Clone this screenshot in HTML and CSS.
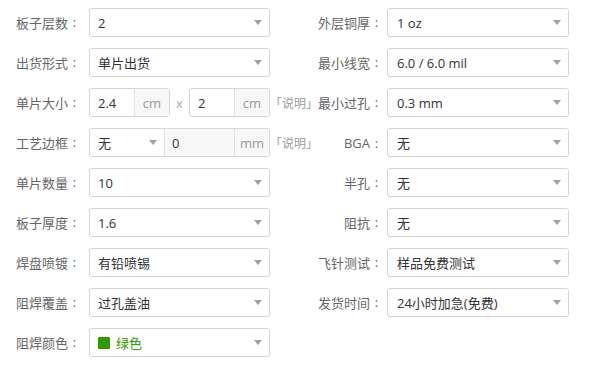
FILE: index.html
```html
<!DOCTYPE html>
<html lang="zh-CN">

<head>
  <meta charset="UTF-8">
  <meta name="viewport" content="width=device-width, initial-scale=1.0">
  <title>PCB 参数</title>
  <link rel="stylesheet" href="styles.css">
</head>

<body>
  <div class="form">
    <div class="item">
      <span class="label">板子层数</span>
      <div class="select"><span>2</span><i class="caret"></i></div>
    </div>
    <div class="item right">
      <span class="label">外层铜厚</span>
      <div class="select"><span>1 oz</span><i class="caret"></i></div>
    </div>

    <div class="item">
      <span class="label">出货形式</span>
      <div class="select"><span>单片出货</span><i class="caret"></i></div>
    </div>
    <div class="item right">
      <span class="label">最小线宽</span>
      <div class="select"><span>6.0 / 6.0 mil</span><i class="caret"></i></div>
    </div>

    <div class="item">
      <span class="label">单片大小</span>
      <div class="size">
        <div class="group small">
          <span class="input">2.4</span><span class="addon">cm</span>
        </div>
        <span class="times">x</span>
        <div class="group small">
          <span class="input">2</span><span class="addon">cm</span>
        </div>
      </div>
      <span class="note">「说明」</span>
    </div>
    <div class="item right">
      <span class="label">最小过孔</span>
      <div class="select"><span>0.3 mm</span><i class="caret"></i></div>
    </div>

    <div class="item">
      <span class="label">工艺边框</span>
      <div class="group">
        <span class="inner-select"><span>无</span><i class="caret"></i></span>
        <span class="input disabled">0</span><span class="addon">mm</span>
      </div>
      <span class="note">「说明」</span>
    </div>
    <div class="item right">
      <span class="label">BGA</span>
      <div class="select"><span>无</span><i class="caret"></i></div>
    </div>

    <div class="item">
      <span class="label">单片数量</span>
      <div class="select"><span>10</span><i class="caret"></i></div>
    </div>
    <div class="item right">
      <span class="label">半孔</span>
      <div class="select"><span>无</span><i class="caret"></i></div>
    </div>

    <div class="item">
      <span class="label">板子厚度</span>
      <div class="select"><span>1.6</span><i class="caret"></i></div>
    </div>
    <div class="item right">
      <span class="label">阻抗</span>
      <div class="select"><span>无</span><i class="caret"></i></div>
    </div>

    <div class="item">
      <span class="label">焊盘喷镀</span>
      <div class="select"><span>有铅喷锡</span><i class="caret"></i></div>
    </div>
    <div class="item right">
      <span class="label">飞针测试</span>
      <div class="select"><span>样品免费测试</span><i class="caret"></i></div>
    </div>

    <div class="item">
      <span class="label">阻焊覆盖</span>
      <div class="select"><span>过孔盖油</span><i class="caret"></i></div>
    </div>
    <div class="item right">
      <span class="label">发货时间</span>
      <div class="select"><span>24小时加急(免费)</span><i class="caret"></i></div>
    </div>

    <div class="item">
      <span class="label">阻焊颜色</span>
      <div class="select"><span class="color"><b class="swatch"></b>绿色</span><i class="caret"></i></div>
    </div>
  </div>
</body>

</html>
```

FILE: styles.css
```css
body {
  margin: 0;
  background: #fff;
  font-family: "Open Sans", "Noto Sans CJK SC", sans-serif;
  font-size: 13px;
  color: #333;
}

.form {
  display: grid;
  grid-template-columns: 274px 279px;
  grid-auto-rows: 29px;
  row-gap: 11px;
  padding: 8px 0 0 16px;
}

.item {
  display: flex;
  align-items: center;
}

.label {
  width: 65px;
  margin-right: 8px;
  color: #666;
  white-space: nowrap;
  display: flex;
}

.label::after {
  content: ":";
  width: 13px;
  text-align: center;
}

.right .label {
  width: 93px;
  margin-right: 4px;
  justify-content: flex-end;
}

.select {
  box-sizing: border-box;
  width: 181px;
  height: 29px;
  border: 1px solid #d6d6d6;
  border-radius: 3px;
  padding: 0 7px 0 8px;
  display: flex;
  align-items: center;
  justify-content: space-between;
}

.right .select {
  width: 182px;
  padding-left: 9px;
}

.caret {
  width: 0;
  height: 0;
  border-top: 5px solid #a0a0a0;
  border-left: 4px solid transparent;
  border-right: 4px solid transparent;
}

.size {
  width: 181px;
  display: flex;
  align-items: center;
  justify-content: space-between;
}

.group {
  box-sizing: border-box;
  width: 181px;
  height: 29px;
  border: 1px solid #d6d6d6;
  border-radius: 3px;
  display: flex;
  overflow: hidden;
}

.group.small {
  width: 81px;
}

.input {
  flex: 1;
  display: flex;
  align-items: center;
  padding-left: 8px;
}

.input.disabled {
  background: #f8f8f8;
  border-left: 1px solid #e2e2e2;
  padding-left: 7px;
}

.addon {
  width: 34px;
  display: flex;
  align-items: center;
  justify-content: center;
  background: #f7f7f7;
  border-left: 1px solid #e2e2e2;
  color: #999;
}

.inner-select {
  width: 59px;
  display: flex;
  align-items: center;
  justify-content: space-between;
  padding: 0 7px 0 8px;
}

.times {
  color: #aaa;
}

.note {
  width: 0;
  white-space: nowrap;
  font-size: 12px;
  color: #999;
}

.color {
  display: flex;
  align-items: center;
  color: #2d9a00;
}

.swatch {
  width: 12px;
  height: 12px;
  background: #339900;
  border-radius: 1px;
  margin-right: 6px;
}
```
